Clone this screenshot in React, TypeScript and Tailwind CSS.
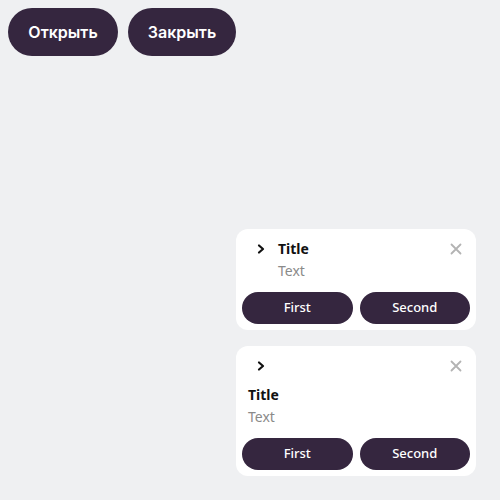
import React from 'react';

function Chevron() {
  return (
    <svg width="16" height="20" viewBox="0 0 16 20" className="shrink-0">
      <path d="M5 6.5 L9 10 L5 13.5" fill="none" stroke="#111" strokeWidth="2.2" strokeLinecap="round" strokeLinejoin="round" />
    </svg>
  );
}

function Close() {
  return (
    <button className="w-5 h-5 flex items-center justify-center shrink-0">
      <svg width="12" height="12" viewBox="0 0 12 12">
        <path d="M1.5 1.5 L10.5 10.5 M10.5 1.5 L1.5 10.5" stroke="#b3b3b3" strokeWidth="1.8" strokeLinecap="round" />
      </svg>
    </button>
  );
}

function Actions() {
  return (
    <div className="grid grid-cols-2 gap-[7px]">
      <button className="h-8 rounded-full bg-[#35263f] text-white text-[13px] font-medium">First</button>
      <button className="h-8 rounded-full bg-[#35263f] text-white text-[13px] font-medium">Second</button>
    </div>
  );
}

export default function App() {
  return (
    <div className="relative w-[500px] h-[500px] bg-[#eff0f2] overflow-hidden" style={{ fontFamily: '"Noto Sans", sans-serif' }}>
      <div className="flex gap-[10px] p-2" style={{ fontFamily: 'Inter, sans-serif' }}>
        <button className="h-12 w-[110px] rounded-full bg-[#35263f] text-white text-base font-semibold">Открыть</button>
        <button className="h-12 w-[108px] rounded-full bg-[#35263f] text-white text-base font-semibold">Закрыть</button>
      </div>

      <div className="absolute right-6 bottom-6 w-[240px] flex flex-col gap-4">
        <div className="bg-white rounded-xl p-1.5">
          <div className="flex items-start px-3 pt-1 pb-[11px]">
            <Chevron />
            <div className="ml-2 flex-1">
              <div className="text-sm font-bold leading-5 text-[#111]">Title</div>
              <div className="text-sm leading-5 text-[#8a8a8a] mt-0.5">Text</div>
            </div>
            <div className="-mr-2"><Close /></div>
          </div>
          <Actions />
        </div>

        <div className="bg-white rounded-xl p-1.5">
          <div className="px-1.5 pt-1 pb-[11px]">
            <div className="flex items-center justify-between pl-1.5">
              <Chevron />
              <div className="-mr-0.5"><Close /></div>
            </div>
            <div className="text-sm font-bold leading-5 text-[#111] mt-[9px]">Title</div>
            <div className="text-sm leading-5 text-[#8a8a8a] mt-0.5">Text</div>
          </div>
          <Actions />
        </div>
      </div>
    </div>
  );
}
